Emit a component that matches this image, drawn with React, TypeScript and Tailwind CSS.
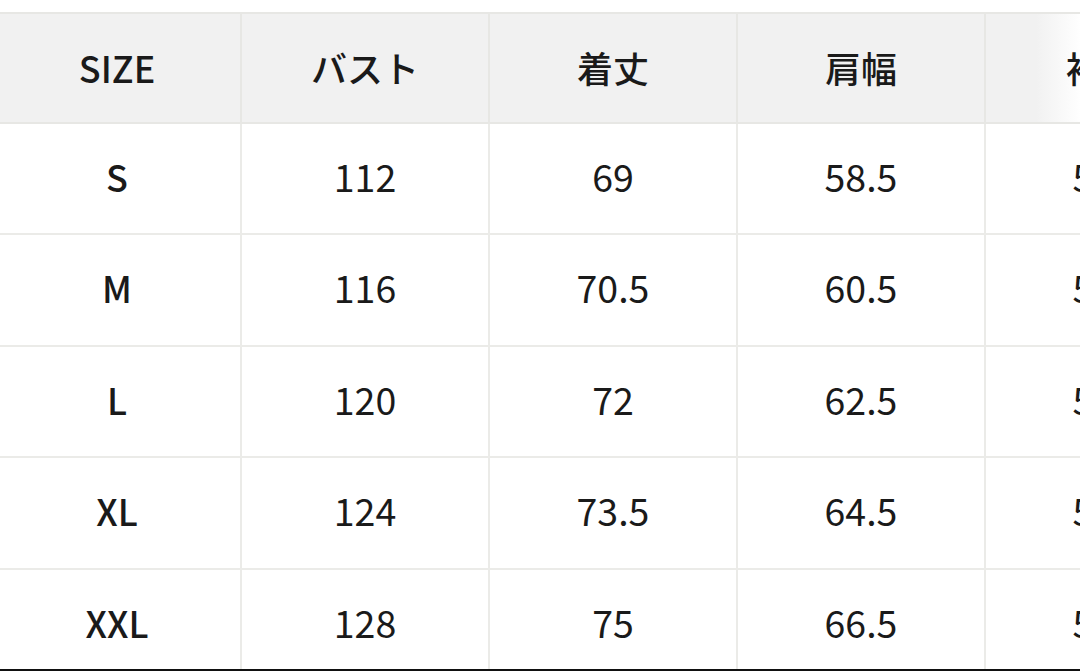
import React from "react";

const headers = ["SIZE", "バスト", "着丈", "肩幅", "袖丈"];
const rows = [
  ["S", "112", "69", "58.5", "51.5"],
  ["M", "116", "70.5", "60.5", "52.5"],
  ["L", "120", "72", "62.5", "53.5"],
  ["XL", "124", "73.5", "64.5", "54.5"],
  ["XXL", "128", "75", "66.5", "55.5"],
];

export default function App() {
  return (
    <div
      className="relative w-[1080px] h-[671px] overflow-hidden bg-white text-[#1a1a1a]"
      style={{ fontFamily: '"Noto Sans CJK JP", "Noto Sans", sans-serif' }}
    >
      <div className="pt-[12px] ml-[-6px]">
        <div className="flex w-max border-t-2 border-[#e7e7e4] bg-[#f1f1f1]">
          {headers.map((h, i) => (
            <div
              key={i}
              className={`flex h-[109.5px] w-[248px] shrink-0 items-center justify-center border-r-2 border-b-2 border-[#e7e7e4] pb-[2px] text-[36px] font-medium box-border ${
                i === 4 ? "bg-[linear-gradient(to_right,#f1f1f1_50px,#ffffff_96px)] pr-[14px]" : ""
              }`}
            >
              {h}
            </div>
          ))}
        </div>
        {rows.map((r, ri) => (
          <div key={ri} className="flex w-max">
            {r.map((c, ci) => (
              <div
                key={ci}
                className={`flex h-[111.5px] w-[248px] shrink-0 items-center justify-center border-r-2 border-b-2 border-[#ebebe8] pb-[5px] box-border ${
                  ci === 0 ? "font-medium text-[36px]" : "font-normal text-[37.5px]"
                }`}
              >
                {c}
              </div>
            ))}
          </div>
        ))}
      </div>
      <div className="absolute bottom-0 left-0 h-[2px] w-full bg-[#111]" />
    </div>
  );
}
